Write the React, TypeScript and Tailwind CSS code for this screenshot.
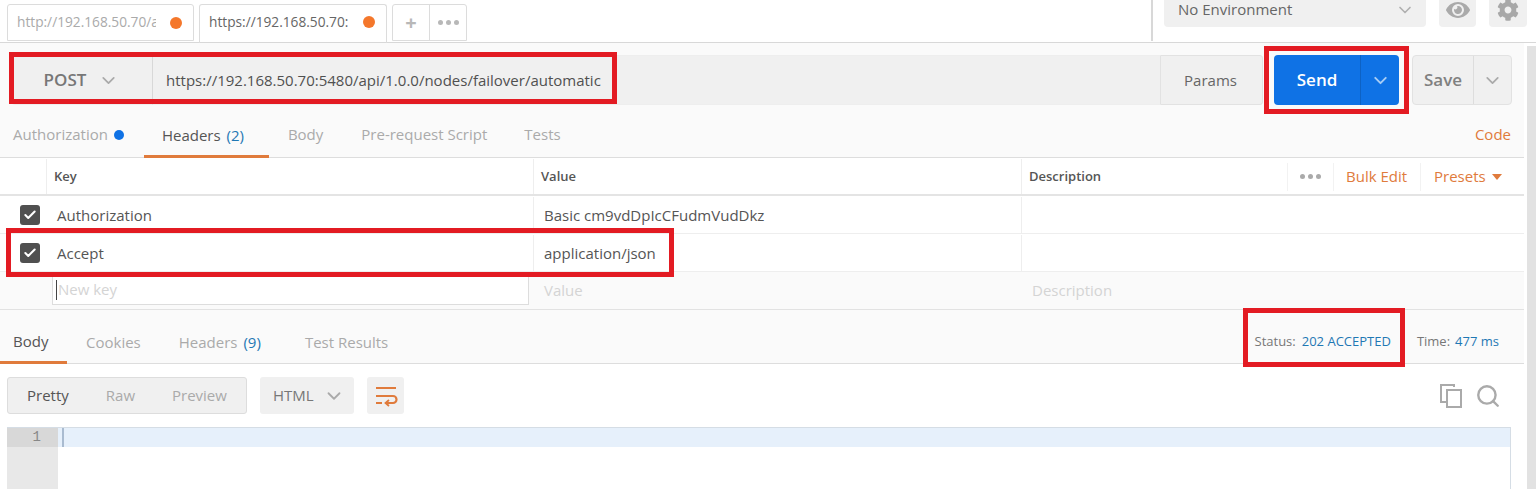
import { Check, ChevronDown, Search } from 'lucide-react';
import { FaCog, FaEye } from 'react-icons/fa';

const font = { fontFamily: '"Open Sans", sans-serif' };

function Dots({ className }: { className: string }) {
  return (
    <span className={`flex gap-[3px] ${className}`}>
      <span className="h-[5px] w-[5px] rounded-full bg-current" />
      <span className="h-[5px] w-[5px] rounded-full bg-current" />
      <span className="h-[5px] w-[5px] rounded-full bg-current" />
    </span>
  );
}

function TabBar() {
  return (
    <div className="flex h-[43px] items-start border-b border-[#d8d8d8] bg-white">
      <div className="ml-[7px] mt-[4px] flex h-[37px] w-[187px] items-center justify-between rounded-t-[3px] border border-[#dcdcdc] pl-[9px] pr-[11px]">
        <span className="w-[139px] overflow-hidden whitespace-nowrap text-[13.7px] text-[#aaaaaa]">http://192.168.50.70/a</span>
        <span className="h-[12px] w-[12px] rounded-full bg-[#f4772b]" />
      </div>
      <div className="ml-[5px] mt-[4px] flex h-[39px] w-[188px] items-center justify-between rounded-t-[3px] border border-b-0 border-[#dcdcdc] pb-[4px] pl-[9px] pr-[11px]">
        <span className="w-[141px] overflow-hidden whitespace-nowrap text-[13.7px] text-[#666666]">https://192.168.50.70:</span>
        <span className="h-[12px] w-[12px] rounded-full bg-[#f4772b]" />
      </div>
      <div className="ml-[5px] mt-[4px] flex h-[37px] w-[75px] rounded-t-[3px] border border-[#dcdcdc]">
        <span className="flex w-[37px] items-center justify-center border-r border-[#dcdcdc] text-[20px] font-bold text-[#b8b8b8]">+</span>
        <span className="flex flex-1 items-center justify-center">
          <Dots className="text-[#b8b8b8]" />
        </span>
      </div>
      <div className="ml-[684px] h-[41px] w-[2px] bg-[#d8d8d8]" />
      <div className="ml-[11px] flex h-[27px] w-[262px] items-center justify-between rounded-b-[4px] bg-[#f0f0f0] pb-[8px] pl-[14px] pr-[11px] text-[15px] text-[#666666]">
        No Environment
        <ChevronDown className="h-[20px] w-[20px] shrink-0 text-[#b0b0b0]" strokeWidth={2} />
      </div>
      <div className="ml-[13px] flex h-[27px] w-[37px] items-center justify-center rounded-b-[4px] bg-[#f0f0f0] pb-[8px]">
        <FaEye className="h-[24px] w-[24px] text-[#aaaaaa]" />
      </div>
      <div className="ml-[13px] flex h-[27px] w-[38px] items-center justify-center rounded-b-[4px] bg-[#f0f0f0] pb-[8px]">
        <FaCog className="h-[22px] w-[22px] text-[#a8a8a8]" />
      </div>
    </div>
  );
}

function UrlRow() {
  return (
    <div className="flex h-[72px] items-start bg-[#fafafa] pl-[12px] pt-[12px]">
      <div className="flex h-[50px] w-[141px] items-center justify-center gap-[12px] rounded-l-[3px] border border-[#eeeeee] border-r-[#d8d8d8] bg-[#f0f0f0] pr-[2px] text-[17px] font-semibold text-[#777777]">
        POST
        <ChevronDown className="h-[21px] w-[21px] text-[#aaaaaa]" strokeWidth={2} />
      </div>
      <div className="flex h-[50px] w-[1007px] items-center border-y border-[#eeeeee] bg-[#f0f0f0] pl-[13px] text-[15px] text-[#505050]">
        https://192.168.50.70:5480/api/1.0.0/nodes/failover/automatic
      </div>
      <div className="flex h-[50px] w-[103px] items-center justify-center rounded-r-[3px] border border-[#e2e2e2] bg-[#f0f0f0] pr-[2px] text-[15px] text-[#666666]">
        Params
      </div>
      <div className="ml-[11px] flex h-[50px] w-[125px] rounded-[4px] bg-[#0f72e5] text-white">
        <span className="flex w-[87px] items-center justify-center border-r border-[#0d62c4] text-[17px] font-semibold">Send</span>
        <span className="flex flex-1 items-center justify-center">
          <ChevronDown className="h-[21px] w-[21px] text-[#a8cdf5]" strokeWidth={2.2} />
        </span>
      </div>
      <div className="ml-[13px] flex h-[50px] w-[100px] rounded-[4px] border border-[#e2e2e2] bg-[#f0f0f0]">
        <span className="flex w-[61px] items-center justify-center border-r border-[#dddddd] text-[17px] font-semibold text-[#808080]">Save</span>
        <span className="flex flex-1 items-center justify-center">
          <ChevronDown className="h-[21px] w-[21px] text-[#aaaaaa]" strokeWidth={2} />
        </span>
      </div>
    </div>
  );
}

function RequestTabs() {
  return (
    <div className="flex h-[43px] items-stretch border-b border-[#dddddd] bg-[#fafafa] pl-[13px] pr-[13px] text-[15px] text-[#aaaaaa]">
      <span className="flex items-center gap-[6px] pb-[3px]">
        Authorization
        <span className="h-[10px] w-[10px] rounded-full bg-[#0f72e5]" />
      </span>
      <span className="-mb-px ml-[20px] flex w-[125px] items-center border-b-[3px] border-[#e07b3c] pl-[18px] text-[#555555]">
        Headers<span className="ml-[6px] text-[#1f78b4]">(2)</span>
      </span>
      <span className="ml-[19px] flex items-center pb-[3px]">Body</span>
      <span className="ml-[38px] flex items-center pb-[3px]">Pre-request Script</span>
      <span className="ml-[37px] flex items-center pb-[3px]">Tests</span>
      <span className="ml-auto flex items-center pb-[3px] text-[#e07b3c]">Code</span>
    </div>
  );
}

function CheckCell() {
  return (
    <div className="flex w-[47px] items-center justify-center pl-[13px]">
      <span className="flex h-[20px] w-[20px] items-center justify-center rounded-[3px] bg-[#505050]">
        <Check className="h-[14px] w-[14px] text-white" strokeWidth={3.5} />
      </span>
    </div>
  );
}

function HeaderRow({ k, v }: { k: string; v: string }) {
  return (
    <div className="flex h-[38px] border-b border-[#eeeeee] bg-white pt-px text-[15px] text-[#555555]">
      <CheckCell />
      <div className="flex w-[487px] items-center border-r border-[#eeeeee] pl-[10px]">{k}</div>
      <div className="flex w-[488px] items-center border-r border-[#eeeeee] pl-[10px]">{v}</div>
    </div>
  );
}

function HeadersTable() {
  return (
    <div>
      <div className="flex h-[38px] border-b-2 border-[#e4e4e4] bg-white pt-px text-[13px] font-semibold text-[#555555]">
        <div className="w-[47px] border-r border-[#eeeeee]" />
        <div className="flex w-[487px] items-center border-r border-[#eeeeee] pl-[7px]">Key</div>
        <div className="flex w-[488px] items-center border-r border-[#eeeeee] pl-[7px]">Value</div>
        <div className="flex flex-1 items-center pl-[7px]">
          Description
          <span className="ml-auto flex h-[28px] items-center border-l border-[#f2f2f2] px-[12px]">
            <Dots className="text-[#aaaaaa]" />
          </span>
          <span className="flex h-[28px] w-[87px] items-center border-l border-[#f2f2f2] pl-[12px] text-[15px] font-normal text-[#e07b3c]">Bulk Edit</span>
          <span className="flex h-[28px] w-[104px] items-center gap-[6px] border-l border-[#f2f2f2] pl-[13px] text-[15px] font-normal text-[#e07b3c]">
            Presets
            <span className="h-0 w-0 border-x-[5px] border-t-[6px] border-x-transparent border-t-[#e07b3c]" />
          </span>
        </div>
      </div>
      <HeaderRow k="Authorization" v="Basic cm9vdDpIcCFudmVudDkz" />
      <HeaderRow k="Accept" v="application/json" />
      <div className="flex h-[38px] items-start border-b border-[#e2e2e2] bg-[#fafafa] text-[15px] text-[#d4d4d4]">
        <div className="ml-[52px] flex h-[33px] w-[477px] items-center border border-t-0 border-[#dddddd] bg-white pl-[3px] pt-[3px]">
          <span className="mr-px h-[20px] w-px bg-[#444444]" />
          New key
        </div>
        <div className="flex h-[37px] w-[498px] items-center pl-[15px]">Value</div>
        <div className="flex h-[37px] items-center pl-[5px]">Description</div>
      </div>
    </div>
  );
}

function ResponseTabs() {
  return (
    <div className="flex h-[54px] items-stretch border-b border-[#dddddd] bg-[#fafafa] text-[15px] text-[#aaaaaa]">
      <span className="-mb-px flex w-[67px] items-center border-b-[3px] border-[#e07b3c] pl-[13px] pt-[11px] text-[#555555]">Body</span>
      <span className="ml-[19px] flex items-center pt-[11px]">Cookies</span>
      <span className="ml-[38px] flex items-center pt-[11px]">
        Headers<span className="ml-[6px] text-[#1f78b4]">(9)</span>
      </span>
      <span className="ml-[44px] flex items-center pt-[11px]">Test Results</span>
      <span className="ml-auto flex items-center pr-[25px] pt-[11px] text-[13px]">
        <span className="text-[#777777]">Status:</span>
        <span className="ml-[6px] text-[#1f78b4]">202 ACCEPTED</span>
        <span className="ml-[26px] text-[#777777]">Time:</span>
        <span className="ml-[5px] text-[#1f78b4]">477 ms</span>
      </span>
    </div>
  );
}

function ResponseToolbar() {
  return (
    <div className="flex h-[63px] items-start bg-white pl-[7px] pt-[13px] text-[15px]">
      <div className="flex h-[37px] w-[240px] items-center rounded-[3px] border border-[#dddddd] bg-[#f0f0f0] pl-[19px] text-[#aaaaaa]">
        <span className="text-[#555555]">Pretty</span>
        <span className="ml-[37px]">Raw</span>
        <span className="ml-[37px]">Preview</span>
      </div>
      <div className="ml-[13px] flex h-[37px] w-[94px] items-center justify-between rounded-[3px] bg-[#f0f0f0] pl-[13px] pr-[9px] text-[#777777]">
        HTML
        <ChevronDown className="h-[22px] w-[22px] text-[#aaaaaa]" strokeWidth={2} />
      </div>
      <div className="ml-[13px] flex h-[37px] w-[37px] items-center justify-center rounded-[3px] bg-[#f0f0f0]">
        <svg width="24" height="22" viewBox="0 0 24 22" fill="none" stroke="#e07b3c" strokeWidth="2.2">
          <path d="M2 3h20M2 11h17a3.5 3.5 0 0 1 0 7h-7M2 18h6" />
          <path d="M15 15l-3.5 3 3.5 3" strokeWidth="1.8" />
        </svg>
      </div>
      <div className="ml-auto mr-[23px] mt-[6px] flex items-center gap-[13px]">
        <svg width="23" height="24" viewBox="0 0 23 24" fill="none" stroke="#aaaaaa" strokeWidth="2">
          <path d="M15 3V1H2v17h6" />
          <path d="M8 6h14v17H8z" />
        </svg>
        <Search className="h-[26px] w-[26px] text-[#aaaaaa]" strokeWidth={2.2} />
      </div>
    </div>
  );
}

function Editor() {
  return (
    <div className="ml-[7px] mr-[13px] h-[62px] border-t border-r border-[#d5dde5] bg-white">
      <div className="flex h-full">
        <div className="w-[51px] bg-[#e8e8e8]">
          <div className="h-[19px] bg-[#d8d8d8] pr-[17px] text-right font-['Liberation_Mono'] text-[14px] leading-[19px] text-[#888888]">1</div>
        </div>
        <div className="h-[19px] flex-1 bg-[#e6f0fb] pl-[4px]">
          <div className="h-[19px] w-[2px] bg-[#a9bbd0]" />
        </div>
      </div>
    </div>
  );
}

export default function App() {
  return (
    <div className="relative flex h-[489px] w-[1536px] overflow-hidden bg-white" style={font}>
      <div className="absolute inset-x-0 top-0">
        <TabBar />
      </div>
      <div className="mr-[3px] mt-[43px] w-[1524px]">
        <UrlRow />
        <RequestTabs />
        <HeadersTable />
        <ResponseTabs />
        <ResponseToolbar />
        <Editor />
      </div>
      <div className="mt-[46px] w-[9px] bg-[#e2e2e2]" />
      <div className="absolute left-[9px] top-[52px] h-[52px] w-[608px] border-[5px] border-[#e31b23]" />
      <div className="absolute left-[1264px] top-[46px] h-[68px] w-[145px] border-[5px] border-[#e31b23]" />
      <div className="absolute left-[6px] top-[228px] h-[49px] w-[668px] border-[5px] border-[#e31b23]" />
      <div className="absolute left-[1243px] top-[308px] h-[59px] w-[162px] border-[5px] border-[#e31b23]" />
    </div>
  );
}
